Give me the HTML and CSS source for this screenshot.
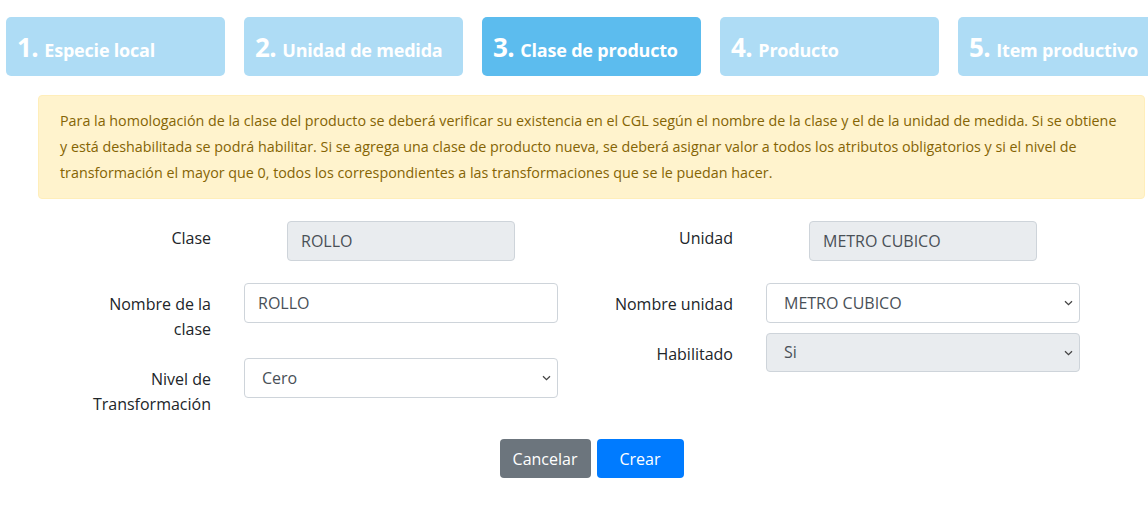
FILE: index.html
```html
<!DOCTYPE html>
<html lang="es">
<head>
<meta charset="utf-8">
<title>Clase de producto</title>
<link rel="stylesheet" href="styles.css">
</head>
<body>
<div class="steps">
  <div class="step"><span class="num">1.</span><span class="lbl">Especie local</span></div>
  <div class="step"><span class="num">2.</span><span class="lbl">Unidad de medida</span></div>
  <div class="step active"><span class="num">3.</span><span class="lbl">Clase de producto</span></div>
  <div class="step"><span class="num">4.</span><span class="lbl">Producto</span></div>
  <div class="step"><span class="num">5.</span><span class="lbl">Item productivo</span></div>
</div>

<div class="alert">Para la homologación de la clase del producto se deberá verificar su existencia en el CGL según el nombre de la clase y el de la unidad de medida. Si se obtiene<br>y está deshabilitada se podrá habilitar. Si se agrega una clase de producto nueva, se deberá asignar valor a todos los atributos obligatorios y si el nivel de<br>transformación el mayor que 0, todos los correspondientes a las transformaciones que se le puedan hacer.</div>

<div class="form">
  <div class="col">
    <div class="field first">
      <label class="label top">Clase</label>
      <div class="ctl"><div class="input readonly narrow">ROLLO</div></div>
    </div>
    <div class="field">
      <label class="label">Nombre de la clase</label>
      <div class="ctl"><div class="input">ROLLO</div></div>
    </div>
    <div class="field">
      <label class="label">Nivel de Transformación</label>
      <div class="ctl"><div class="input select"><span>Cero</span><svg class="chev" width="9" height="6" viewBox="0 0 9 6"><path d="M1 1.2 L4.5 4.6 L8 1.2" fill="none" stroke="#444" stroke-width="1.3"/></svg></div></div>
    </div>
  </div>
  <div class="col">
    <div class="field first">
      <label class="label top">Unidad</label>
      <div class="ctl"><div class="input readonly narrow">METRO CUBICO</div></div>
    </div>
    <div class="field tight">
      <label class="label">Nombre unidad</label>
      <div class="ctl"><div class="input select"><span>METRO CUBICO</span><svg class="chev" width="9" height="6" viewBox="0 0 9 6"><path d="M1 1.2 L4.5 4.6 L8 1.2" fill="none" stroke="#444" stroke-width="1.3"/></svg></div></div>
    </div>
    <div class="field">
      <label class="label">Habilitado</label>
      <div class="ctl"><div class="input select readonly short"><span>Si</span><svg class="chev" width="9" height="6" viewBox="0 0 9 6"><path d="M1 1.2 L4.5 4.6 L8 1.2" fill="none" stroke="#444" stroke-width="1.3"/></svg></div></div>
    </div>
  </div>
</div>

<div class="actions">
  <button class="btn secondary">Cancelar</button>
  <button class="btn primary">Crear</button>
</div>
</body>
</html>
```

FILE: styles.css
```css
html, body {
  margin: 0;
  padding: 0;
  overflow: hidden;
  background: #fff;
}
body {
  font-family: "Open Sans", "Noto Sans", sans-serif;
  color: #212529;
  width: 1148px;
}
.steps {
  display: flex;
  gap: 19px;
  padding: 17px 0 0 6px;
  width: 1148px;
  box-sizing: border-box;
  overflow: hidden;
}
.step {
  flex: 0 0 219px;
  height: 59px;
  box-sizing: border-box;
  background: #aedcf5;
  border-radius: 5px;
  color: #fff;
  font-weight: 700;
  display: flex;
  align-items: baseline;
  padding: 13px 0 0 11px;
  line-height: 34px;
  white-space: nowrap;
}
.step.active { background: #5cbcee; }
.step .num { font-size: 26px; margin-right: 6px; letter-spacing: -0.5px; }
.step .lbl { font-size: 18px; letter-spacing: -0.2px; }

.alert {
  margin: 19px 0 0 38px;
  width: 1107px;
  box-sizing: border-box;
  padding: 12px 0 12px 21px;
  background: #fff3cd;
  border: 1px solid #ffeeba;
  border-radius: 4px;
  color: #856404;
  font-size: 14.3px;
  line-height: 26px;
  white-space: nowrap;
}

.form {
  display: grid;
  grid-template-columns: 522px 522px;
  margin: 22px 0 0 38px;
}
.field {
  display: grid;
  grid-template-columns: 173px 314px;
  column-gap: 33px;
  align-items: start;
  margin-bottom: 16px;
}
.field.first { margin-bottom: 22px; }
.field.tight { margin-bottom: 10px; }
.label {
  text-align: right;
  font-size: 16px;
  line-height: 25px;
  padding: 9px 0 0 45px;
}
.label.top { padding-top: 5px; }
.ctl { display: flex; justify-content: center; }
.input {
  box-sizing: border-box;
  width: 100%;
  height: 40px;
  border: 1px solid #ced4da;
  border-radius: 4px;
  background: #fff;
  color: #495057;
  font-size: 16px;
  line-height: 38px;
  padding: 0 13px;
}
.input.narrow { width: 228px; }
.input.short { height: 39px; line-height: 37px; }
.input.readonly { background: #e9ecef; }
.select {
  display: flex;
  align-items: center;
  justify-content: space-between;
  padding: 0 6px 0 17px;
}
.chev { display: block; }

.actions {
  display: flex;
  justify-content: center;
  gap: 6px;
  margin: 6px 0 0 38px;
  width: 1107px;
}
.btn {
  height: 39px;
  border: none;
  border-radius: 4px;
  color: #fff;
  font-family: inherit;
  font-size: 16px;
  padding: 0 12px;
}
.btn.secondary { background: #6c757d; width: 91px; }
.btn.primary { background: #007bff; width: 87px; }
```
